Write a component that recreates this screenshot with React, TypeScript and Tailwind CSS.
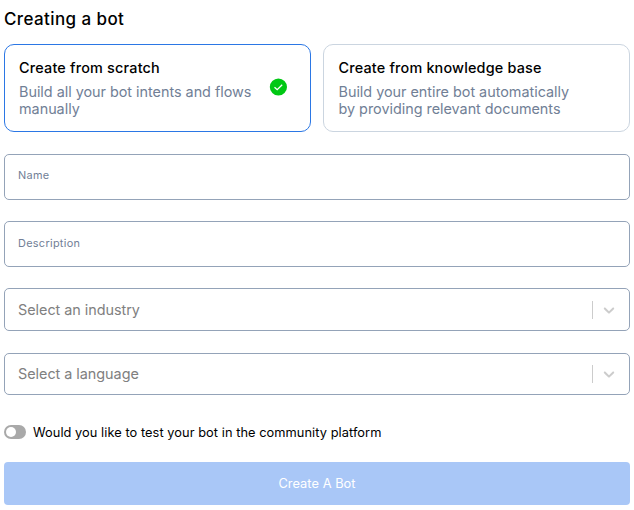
import React from "react";

function Chevron() {
  return (
    <svg width="20" height="20" viewBox="0 0 20 20" fill="#cccccc" aria-hidden="true">
      <path d="M4.516 7.548c0.436-0.446 1.043-0.481 1.576 0l3.908 3.747 3.908-3.747c0.533-0.481 1.141-0.446 1.574 0 0.436 0.445 0.408 1.197 0 1.615-0.406 0.418-4.695 4.502-4.695 4.502-0.217 0.223-0.502 0.335-0.787 0.335s-0.57-0.112-0.789-0.335c0 0-4.287-4.084-4.695-4.502s-0.436-1.17 0-1.615z" transform="translate(1 1) scale(0.9)" />
    </svg>
  );
}

function Field({ label, className }: { label: string; className: string }) {
  return (
    <div className={`h-[46px] rounded-[5px] border border-[#94a3b8] px-[13px] text-[10.9px] leading-4 tracking-[0.3px] text-[#718096] ${className}`}>
      {label}
    </div>
  );
}

function SelectBox({ label, className }: { label: string; className: string }) {
  return (
    <div className={`flex items-center rounded-[5px] border border-[#94a3b8] pl-[13px] pr-[10px] text-[14.4px] tracking-[-0.03px] text-[#808080] ${className}`}>
      <span className="flex-1">{label}</span>
      <span className="mr-[6px] h-[18px] w-px bg-[#cccccc]" />
      <Chevron />
    </div>
  );
}

export default function App() {
  return (
    <main className="h-[510px] w-[634px] overflow-hidden bg-white px-1 pt-2 font-['Inter',sans-serif] text-black [font-optical-sizing:none]">
      <h1 className="h-9 text-[17px] leading-[22px] font-medium tracking-[0.4px]">Creating a bot</h1>

      <div className="grid grid-cols-2 gap-3">
        <section className="flex h-[88px] rounded-[10px] border border-[#2b77e5] pl-[14px] pt-[14px]">
          <div className="w-[250px]">
            <h2 className="text-[14.4px] leading-[18px] font-medium tracking-[0.2px]">Create from scratch</h2>
            <p className="mt-[6px] w-[240px] text-[14.4px] leading-[17px] tracking-[-0.02px] text-[#718096]">
              Build all your bot intents and flows manually
            </p>
          </div>
          <svg className="mt-[19px]" width="18" height="18" viewBox="0 0 18 18" fill="none" aria-hidden="true">
            <circle cx="9.4" cy="9" r="8.6" fill="#00c814" />
            <path d="M5.5 9.2l2.7 2.5 5-5" stroke="white" strokeWidth="1.3" />
          </svg>
        </section>
        <section className="h-[88px] rounded-[10px] border border-[#cbd5e0] pl-[14.5px] pt-[14px]">
          <h2 className="text-[14.4px] leading-[18px] font-medium tracking-[0.18px]">Create from knowledge base</h2>
          <p className="mt-[6px] w-[240px] text-[14.4px] leading-[17px] tracking-[-0.02px] text-[#718096]">
            Build your entire bot automatically by providing relevant documents
          </p>
        </section>
      </div>

      <Field label="Name" className="mt-[22px] pt-3" />
      <Field label="Description" className="mt-[21px] pt-[13px]" />
      <SelectBox label="Select an industry" className="mt-[21px] h-[43px]" />
      <SelectBox label="Select a language" className="mt-[22px] h-[42px]" />

      <label className="mt-7 flex h-[18px] items-center gap-[7px] text-[12.8px] leading-[18px] tracking-[0.06px]">
        <span className="flex h-[14px] w-[22px] items-center rounded-full bg-[#a9a9a9] pl-[1.5px]">
          <span className="h-[10px] w-[10px] rounded-full bg-white" />
        </span>
        <span className="pt-[2px]">Would you like to test your bot in the community platform</span>
      </label>

      <button className="mt-[21px] block h-[43px] w-full rounded-[4px] bg-[#a9c7f7] text-[12.8px] tracking-[0.06px] text-white">
        Create A Bot
      </button>
    </main>
  );
}
